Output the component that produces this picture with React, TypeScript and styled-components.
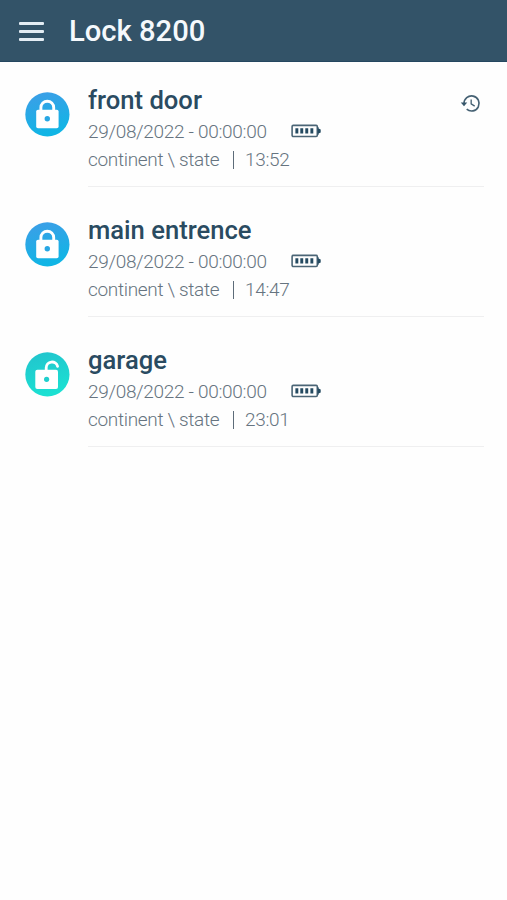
import React from "react";
import styled, { createGlobalStyle } from "styled-components";

const GlobalStyle = createGlobalStyle`
  *, *::before, *::after { box-sizing: border-box; }
  body {
    margin: 0;
    background: #fefefe;
    font-family: Roboto, "Liberation Sans", sans-serif;
  }
`;

const Screen = styled.div`
  min-height: 100vh;
  display: flex;
  flex-direction: column;
`;

const Header = styled.header`
  height: 62px;
  display: flex;
  align-items: center;
  gap: 25px;
  padding-left: 19px;
  background: #335368;
  border-bottom: 1px solid #254760;
`;

const MenuButton = styled.button`
  display: flex;
  flex-direction: column;
  gap: 5px;
  width: 25px;
  padding: 2px 0 0;
  border: 0;
  background: none;
`;

const MenuBar = styled.span`
  height: 3px;
  border-radius: 1px;
  background: #e4edf4;
`;

const Title = styled.h1`
  margin: 0;
  padding-top: 1px;
  font-size: 29.2px;
  font-weight: 500;
  line-height: 34px;
  color: #f5f9fc;
`;

const List = styled.ul`
  list-style: none;
  margin: 0;
  padding: 0 23px 0 25px;
`;

const Row = styled.li`
  height: 130px;
  display: flex;
  gap: 18px;
`;

const StatusIcon = styled.svg`
  flex: none;
  width: 45px;
  height: 45px;
  margin-top: 30px;
`;

const Details = styled.div`
  flex: 1;
  height: 125px;
  padding-top: 21px;
  border-bottom: 1px solid #efeff0;
`;

const NameLine = styled.div`
  display: flex;
  justify-content: space-between;
  height: 35px;
`;

const Name = styled.h2`
  margin: 0;
  font-size: 25.6px;
  font-weight: 500;
  line-height: 34px;
  color: #2a4b61;
`;

const HistoryIcon = styled.svg`
  width: 21px;
  height: 21px;
  margin: 10px 3px 0 0;
`;

const InfoLine = styled.div`
  display: flex;
  align-items: center;
  height: 28px;
  font-size: 19px;
  font-weight: 300;
  line-height: 28px;
  letter-spacing: -0.32px;
  white-space: pre;
  color: #667480;
`;

const DateText = styled.span`
  width: 203px;
`;

const BatteryIcon = styled.svg`
  width: 30px;
  height: 14px;
  margin-bottom: 2px;
`;

const Place = styled.span`
  width: 145px;
`;

const Divider = styled.span`
  width: 1px;
  height: 18px;
  margin: 0 11px 1px 0;
  background: #5d6c79;
`;

type Lock = { name: string; time: string; open?: boolean; history?: boolean };

const locks: Lock[] = [
  { name: "front door", time: "13:52", history: true },
  { name: "main entrence", time: "14:47" },
  { name: "garage", time: "23:01", open: true },
];

function LockStatus({ open }: { open?: boolean }) {
  const id = open ? "status-open" : "status-locked";
  return (
    <StatusIcon viewBox="0 0 45 45">
      <defs>
        <linearGradient id={id} x1="0" y1="0" x2="0.25" y2="1">
          <stop offset="0" stopColor={open ? "#22c3cd" : "#3f9de7"} />
          <stop offset="1" stopColor={open ? "#1be0d2" : "#10b5e5"} />
        </linearGradient>
      </defs>
      <circle cx="22.4" cy="22.4" r="22.1" fill={`url(#${id})`} />
      {open ? (
        <>
          <path d="M21.2 19v-3.2a5.8 5.8 0 0 1 11.4-1.5" fill="none" stroke="#fff" strokeWidth="2.8" strokeLinecap="round" />
          <rect x="10.3" y="17.7" width="22.7" height="19.3" rx="2" fill="#fff" />
          <circle cx="21.6" cy="27.3" r="2.6" fill="#20cfcd" />
        </>
      ) : (
        <>
          <path d="M15.9 19v-3.4a6.4 6.4 0 0 1 12.8 0V19" fill="none" stroke="#fff" strokeWidth="2.9" />
          <rect x="11.2" y="17.7" width="22.4" height="18.6" rx="1.8" fill="#fff" />
          <circle cx="22.3" cy="26.8" r="2.7" fill="#28a7e4" />
        </>
      )}
    </StatusIcon>
  );
}

function Battery() {
  return (
    <BatteryIcon viewBox="0 0 30 14">
      <rect x="1.1" y="1.4" width="25.2" height="11.1" rx="1.2" fill="none" stroke="#4b6576" strokeWidth="1.6" />
      <path d="M26.6 3.2h1v1.4l2.1 1v2.8l-2.1 1v1.4h-1z" fill="#244a61" />
      <path d="M4.4 4.2h2.9v5.4H4.4zM9.3 4.2h2.9v5.4H9.3zM14.3 4.2h2.9v5.4h-2.9zM19.4 4.2h2.9v5.4h-2.9z" fill="#244a61" />
    </BatteryIcon>
  );
}

function History() {
  return (
    <HistoryIcon viewBox="0 0 22 22" fill="none" stroke="#456173" strokeWidth="1.7">
      <path d="M4.2 11.2A7.9 7.9 0 1 1 7 17" />
      <path d="M11.7 6.7v4.7l3.7 2.4" strokeWidth="1.4" />
      <path d="M.8 10h6.8l-3.4 3.9z" fill="#36566a" stroke="none" />
    </HistoryIcon>
  );
}

export default function App() {
  return (
    <Screen>
      <GlobalStyle />
      <Header>
        <MenuButton aria-label="Menu">
          <MenuBar />
          <MenuBar />
          <MenuBar />
        </MenuButton>
        <Title>Lock 8200</Title>
      </Header>
      <List>
        {locks.map((lock) => (
          <Row key={lock.name}>
            <LockStatus open={lock.open} />
            <Details>
              <NameLine>
                <Name>{lock.name}</Name>
                {lock.history && <History />}
              </NameLine>
              <InfoLine>
                <DateText>29/08/2022 - 00:00:00</DateText>
                <Battery />
              </InfoLine>
              <InfoLine>
                <Place>{"continent \\ state"}</Place>
                <Divider />
                <span>{lock.time}</span>
              </InfoLine>
            </Details>
          </Row>
        ))}
      </List>
    </Screen>
  );
}
